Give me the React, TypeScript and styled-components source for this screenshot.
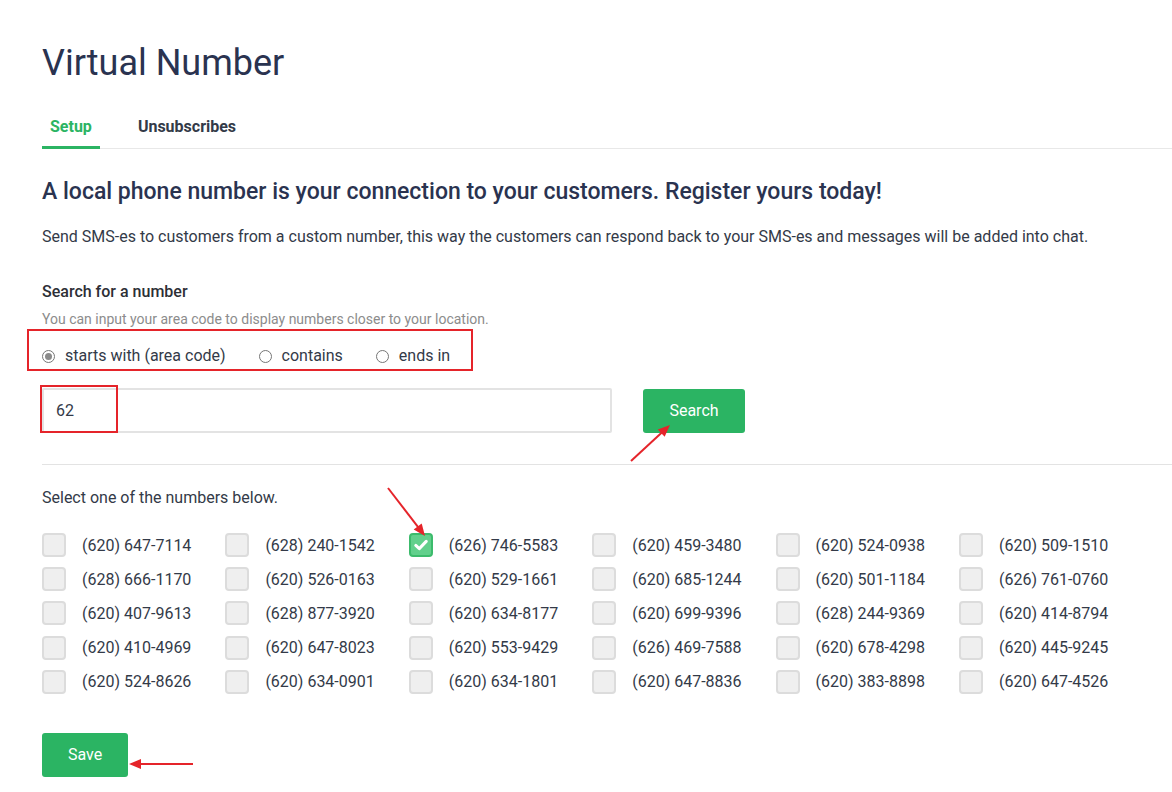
import styled, { createGlobalStyle } from "styled-components";

const GlobalStyle = createGlobalStyle`
  body {
    margin: 0;
    background: #ffffff;
    font-family: Roboto, "Liberation Sans", Arial, sans-serif;
    color: #333a48;
  }
`;

const green = "#2bb463";
const red = "#e5242a";

const numbers = [
  "(620) 647-7114", "(628) 240-1542", "(626) 746-5583", "(620) 459-3480", "(620) 524-0938", "(620) 509-1510",
  "(628) 666-1170", "(620) 526-0163", "(620) 529-1661", "(620) 685-1244", "(620) 501-1184", "(626) 761-0760",
  "(620) 407-9613", "(628) 877-3920", "(620) 634-8177", "(620) 699-9396", "(628) 244-9369", "(620) 414-8794",
  "(620) 410-4969", "(620) 647-8023", "(620) 553-9429", "(626) 469-7588", "(620) 678-4298", "(620) 445-9245",
  "(620) 524-8626", "(620) 634-0901", "(620) 634-1801", "(620) 647-8836", "(620) 383-8898", "(620) 647-4526",
];

const Arrow = ({ x1, y1, x2, y2 }: { x1: number; y1: number; x2: number; y2: number }) => {
  const minX = Math.min(x1, x2) - 10;
  const minY = Math.min(y1, y2) - 10;
  const w = Math.abs(x2 - x1) + 20;
  const h = Math.abs(y2 - y1) + 20;
  const ang = Math.atan2(y2 - y1, x2 - x1);
  const len = 13;
  const spread = 0.4;
  const ax = x2 - len * Math.cos(ang - spread);
  const ay = y2 - len * Math.sin(ang - spread);
  const bx = x2 - len * Math.cos(ang + spread);
  const by = y2 - len * Math.sin(ang + spread);
  const sx = x2 - (len - 3) * Math.cos(ang);
  const sy = y2 - (len - 3) * Math.sin(ang);
  return (
    <ArrowSvg
      width={w}
      height={h}
      viewBox={`${minX} ${minY} ${w} ${h}`}
      style={{ left: minX, top: minY }}
    >
      <line x1={x1} y1={y1} x2={sx} y2={sy} stroke={red} strokeWidth={2} />
      <polygon points={`${x2},${y2} ${ax},${ay} ${bx},${by}`} fill={red} />
    </ArrowSvg>
  );
};

const App = () => {
  return (
    <>
      <GlobalStyle />
      <Page>
        <Title>Virtual Number</Title>
        <Tabs>
          <Tab $active>Setup</Tab>
          <Tab>Unsubscribes</Tab>
        </Tabs>
        <Headline>A local phone number is your connection to your customers. Register yours today!</Headline>
        <Lead>
          Send SMS-es to customers from a custom number, this way the customers can respond back to your SMS-es and
          messages will be added into chat.
        </Lead>

        <Label>Search for a number</Label>
        <Hint>You can input your area code to display numbers closer to your location.</Hint>

        <RadioRow>
          <RadioItem>
            <RadioDot $checked />
            starts with (area code)
          </RadioItem>
          <RadioItem>
            <RadioDot />
            contains
          </RadioItem>
          <RadioItem>
            <RadioDot />
            ends in
          </RadioItem>
          <Highlight style={{ left: -15, top: -17, width: 446, height: 42 }} />
        </RadioRow>

        <SearchRow>
          <InputWrap>
            <TextInput defaultValue="62" />
            <Highlight style={{ left: -2, top: -3, width: 78, height: 48 }} />
          </InputWrap>
          <Button $wide>Search</Button>
        </SearchRow>

        <Divider />

        <SelectText>Select one of the numbers below.</SelectText>

        <NumberGrid>
          {numbers.map((n, i) => (
            <NumberItem key={n + i}>
              <Check $checked={i === 2}>
                {i === 2 && (
                  <svg width="14" height="12" viewBox="0 0 14 12">
                    <path d="M1.8 6.4 L5.3 9.6 L12.2 2.4" fill="none" stroke="#fff" strokeWidth="3" strokeLinecap="round" strokeLinejoin="round" />
                  </svg>
                )}
              </Check>
              {n}
            </NumberItem>
          ))}
        </NumberGrid>

        <Button>Save</Button>
      </Page>
      <Arrow x1={631} y1={461} x2={670} y2={425} />
      <Arrow x1={388} y1={488} x2={425} y2={536} />
      <Arrow x1={193} y1={764} x2={129} y2={764} />
    </>
  );
};

export default App;

const Page = styled.div`
  padding: 41px 0 20px 42px;
  display: flex;
  flex-direction: column;
  align-items: flex-start;
`;

const Title = styled.h1`
  margin: 0;
  font-size: 36px;
  font-weight: 400;
  line-height: 44px;
  color: #2a3350;
`;

const Tabs = styled.div`
  align-self: stretch;
  display: flex;
  margin-top: 25px;
  border-bottom: 1px solid #e8e8e8;
`;

const Tab = styled.div<{ $active?: boolean }>`
  padding: 7px 8px 9px;
  margin-right: 30px;
  font-size: 16px;
  font-weight: 700;
  line-height: 20px;
  color: ${({ $active }) => ($active ? green : "#333a48")};
  border-bottom: 3px solid ${({ $active }) => ($active ? green : "transparent")};
  margin-bottom: -1px;
`;

const Headline = styled.h2`
  margin: 28px 0 0;
  font-size: 23px;
  font-weight: 500;
  line-height: 30px;
  color: #2a3350;
`;

const Lead = styled.p`
  margin: 19px 0 0;
  font-size: 16px;
  line-height: 22px;
  color: #333a48;
`;

const Label = styled.div`
  margin-top: 33px;
  font-size: 16px;
  font-weight: 500;
  line-height: 22px;
  color: #2d2f36;
`;

const Hint = styled.div`
  margin-top: 7px;
  font-size: 14px;
  line-height: 18px;
  color: #8c8c8c;
`;

const RadioRow = styled.div`
  position: relative;
  display: flex;
  align-items: center;
  margin-top: 18px;
  height: 20px;
`;

const RadioItem = styled.label`
  display: flex;
  align-items: center;
  gap: 10px;
  margin-right: 33px;
  font-size: 16px;
  line-height: 20px;
  color: #333a48;
`;

const RadioDot = styled.span<{ $checked?: boolean }>`
  width: 11px;
  height: 11px;
  border-radius: 50%;
  border: 1px solid #767676;
  background: #fff;
  position: relative;

  &::after {
    content: "";
    display: ${({ $checked }) => ($checked ? "block" : "none")};
    position: absolute;
    left: 2px;
    top: 2px;
    width: 7px;
    height: 7px;
    border-radius: 50%;
    background: #8a8a8a;
  }
`;

const Highlight = styled.div`
  position: absolute;
  border: 2px solid ${red};
  box-sizing: border-box;
  pointer-events: none;
`;

const SearchRow = styled.div`
  display: flex;
  align-items: center;
  gap: 31px;
  margin-top: 22px;
`;

const InputWrap = styled.div`
  position: relative;
`;

const TextInput = styled.input`
  box-sizing: border-box;
  width: 570px;
  height: 45px;
  border: 2px solid #e3e3e3;
  border-radius: 2px;
  padding: 0 12px;
  font-family: Roboto, "Liberation Sans", Arial, sans-serif;
  font-size: 16px;
  color: #333a48;
  outline: none;
`;

const Button = styled.button<{ $wide?: boolean }>`
  height: 44px;
  width: ${({ $wide }) => ($wide ? "102px" : "86px")};
  border: none;
  border-radius: 3px;
  background: ${green};
  color: #ffffff;
  font-family: Roboto, "Liberation Sans", Arial, sans-serif;
  font-size: 16px;
  font-weight: 400;
  cursor: pointer;
`;

const Divider = styled.div`
  align-self: stretch;
  height: 1px;
  background: #e3e3e3;
  margin-top: 31px;
`;

const SelectText = styled.div`
  margin-top: 23px;
  font-size: 16px;
  line-height: 20px;
  color: #333a48;
`;

const NumberGrid = styled.div`
  display: grid;
  grid-template-columns: repeat(6, 183.4px);
  grid-auto-rows: 34.2px;
  margin-top: 20px;
  margin-bottom: 34px;
`;

const NumberItem = styled.label`
  display: flex;
  align-items: center;
  gap: 16px;
  font-size: 16px;
  color: #333a48;
`;

const Check = styled.span<{ $checked?: boolean }>`
  box-sizing: border-box;
  width: 24px;
  height: 24px;
  border-radius: 4px;
  border: 2px solid ${({ $checked }) => ($checked ? "#3cbb6c" : "#dcdcdc")};
  background: ${({ $checked }) => ($checked ? "#62d08c" : "#efefef")};
  display: flex;
  align-items: center;
  justify-content: center;
`;

const ArrowSvg = styled.svg`
  position: absolute;
  pointer-events: none;
  overflow: visible;
`;
